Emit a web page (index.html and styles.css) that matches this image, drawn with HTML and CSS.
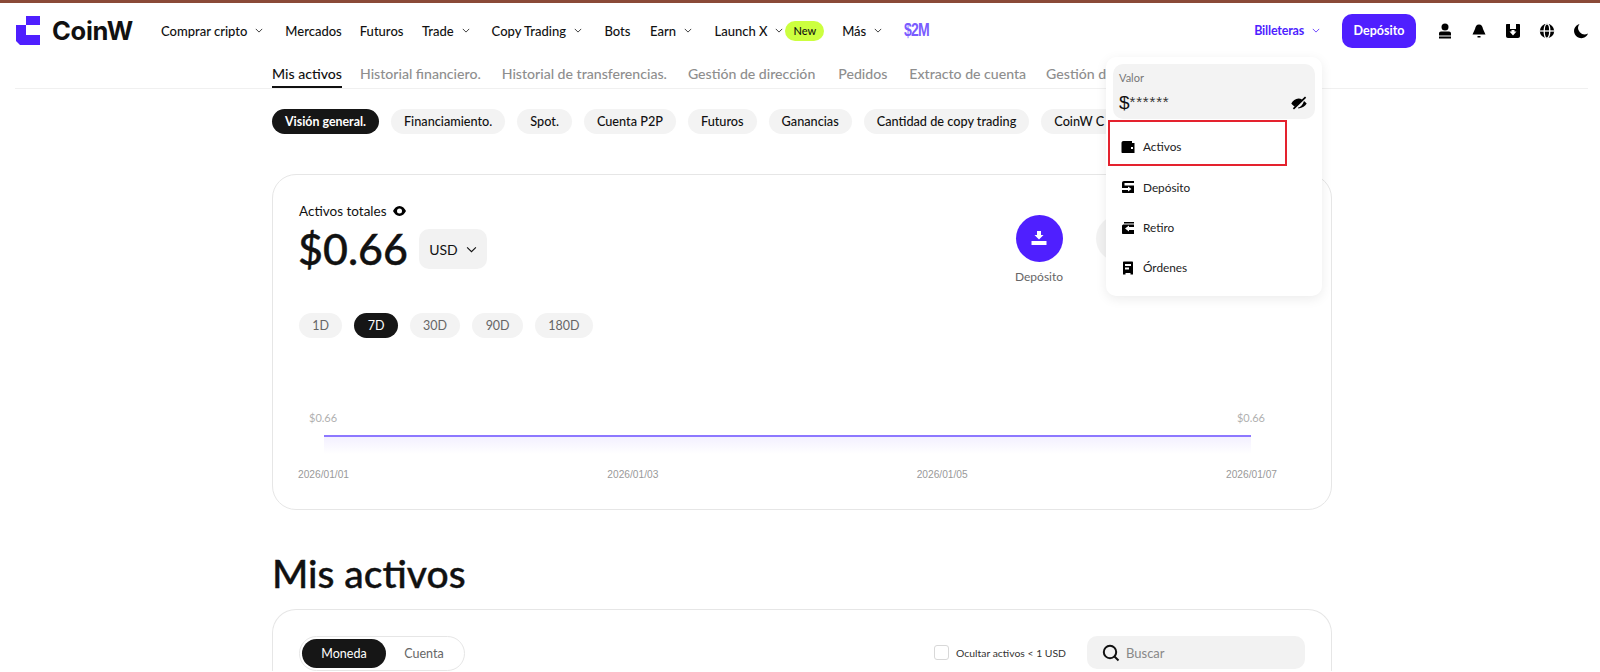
FILE: index.html
```html
<!DOCTYPE html>
<html lang="es">
    <head>
        <meta charset="UTF-8">
        <meta name="viewport" content="width=device-width, initial-scale=1.0">
        <title>CoinW - Mis activos</title>
        <link rel="stylesheet" href="styles.css">
    </head>
    <body>
        <div class="franja"></div>

        <!-- Cabecera -->
        <header class="cabecera">
            <a class="logo">
                <svg class="logo-icono" width="24" height="29" viewBox="0 0 24 29"><path fill="#4f1fff" d="M10 0H24V9H10ZM0 9L4 9H10V19H24V29H4L0 25Z"/></svg>
                <span class="logo-texto">CoinW</span>
            </a>
            <nav class="menu">
                <a class="menu-item m-comprar">Comprar cripto <svg class="flecha" viewBox="0 0 10 6"><path d="M1 1l4 4 4-4"/></svg></a>
                <a class="menu-item m-mercados">Mercados</a>
                <a class="menu-item m-futuros">Futuros</a>
                <a class="menu-item m-trade">Trade <svg class="flecha" viewBox="0 0 10 6"><path d="M1 1l4 4 4-4"/></svg></a>
                <a class="menu-item m-copy">Copy Trading <svg class="flecha" viewBox="0 0 10 6"><path d="M1 1l4 4 4-4"/></svg></a>
                <a class="menu-item m-bots">Bots</a>
                <a class="menu-item m-earn">Earn <svg class="flecha" viewBox="0 0 10 6"><path d="M1 1l4 4 4-4"/></svg></a>
                <a class="menu-item m-launch">Launch X <svg class="flecha" viewBox="0 0 10 6"><path d="M1 1l4 4 4-4"/></svg><span class="nuevo">New</span></a>
                <a class="menu-item m-mas">Más <svg class="flecha" viewBox="0 0 10 6"><path d="M1 1l4 4 4-4"/></svg></a>
                <a class="premio">$2M</a>
            </nav>
            <div class="cabecera-der">
                <a class="billeteras">Billeteras <svg class="flecha" viewBox="0 0 10 6"><path d="M1 1l4 4 4-4"/></svg></a>
                <a class="boton-deposito">Depósito</a>
                <div class="iconos">
                    <svg width="16" height="16" viewBox="0 0 16 16"><circle cx="8" cy="4" r="3.5"/><path d="M4 8.500H12C13.200 8.500 14 9.300 14 10.500V12.500H2V10.500C2 9.300 2.800 8.500 4 8.500ZM2 13.500H14V15.500H2Z"/></svg>
                    <svg width="16" height="16" viewBox="0 0 16 16"><path d="M8 1.500C10.500 1.500 11.500 3.500 12 6L14.500 11.500H1.500L4 6C4.500 3.500 5.500 1.500 8 1.500ZM6.500 13H9.500V14.500H6.500Z"/></svg>
                    <svg width="16" height="16" viewBox="0 0 16 16"><path fill-rule="evenodd" d="M2 1H5V6H11V1H14C14.600 1 15 1.400 15 2V13C15 14.200 14.200 15 13 15H3C1.800 15 1 14.200 1 13V2C1 1.400 1.400 1 2 1ZM4.500 8.500L8 12.500L11.500 8.500H9.500V7H6.500V8.500Z"/></svg>
                    <svg width="16" height="16" viewBox="0 0 16 16"><circle cx="8" cy="8" r="7.200"/><ellipse cx="8" cy="8" rx="2.800" ry="7.200" fill="none" stroke="#fff" stroke-width="1.300"/><path d="M0.500 8H15.500" stroke="#fff" stroke-width="1.300"/></svg>
                    <svg width="16" height="16" viewBox="0 0 16 16"><path d="M6.500 1A7.200 7.200 0 1 0 15 10.500A6.500 6.500 0 0 1 6.500 1Z"/></svg>
                </div>
            </div>
        </header>

        <!-- Pestañas -->
        <div class="pestanas">
            <a class="pestana activa">Mis activos</a>
            <a class="pestana p-financiero">Historial financiero.</a>
            <a class="pestana p-transferencias">Historial de transferencias.</a>
            <a class="pestana p-direccion">Gestión de dirección</a>
            <a class="pestana p-pedidos">Pedidos</a>
            <a class="pestana p-extracto">Extracto de cuenta</a>
            <a class="pestana">Gestión de</a>
        </div>

        <main class="contenido">
            <div class="filtros">
                <a class="filtro activo">Visión general.</a>
                <a class="filtro">Financiamiento.</a>
                <a class="filtro">Spot.</a>
                <a class="filtro">Cuenta P2P</a>
                <a class="filtro">Futuros</a>
                <a class="filtro">Ganancias</a>
                <a class="filtro">Cantidad de copy trading</a>
                <a class="filtro">CoinW C</a>
            </div>

            <!-- Resumen de activos -->
            <section class="tarjeta resumen">
                <div class="resumen-top">
                    <div>
                        <div class="total-titulo">Activos totales
                            <svg width="13" height="10" viewBox="0 0 13 10"><path fill-rule="evenodd" d="M6.500 0C9.500 0 11.800 2.500 13 5C11.800 7.500 9.500 10 6.500 10C3.500 10 1.200 7.500 0 5C1.200 2.500 3.500 0 6.500 0ZM6.500 2.500A2.500 2.500 0 1 0 6.500 7.500A2.500 2.500 0 1 0 6.500 2.500Z"/></svg>
                        </div>
                        <div class="total-fila">
                            <span class="total-valor">$0.66</span>
                            <span class="moneda">USD <svg class="flecha" viewBox="0 0 10 6"><path d="M1 1l4 4 4-4"/></svg></span>
                        </div>
                    </div>
                    <div class="acciones">
                        <div class="accion">
                            <span class="circulo principal">
                                <svg width="18" height="18" viewBox="0 0 18 18"><path fill="#fff" d="M7 1H11V5H13.500L9 9.500L4.500 5H7ZM1.500 11H16.500V15H1.500Z"/></svg>
                            </span>
                            Depósito
                        </div>
                        <div class="accion">
                            <span class="circulo"></span>
                        </div>
                    </div>
                </div>

                <div class="rangos">
                    <a class="rango">1D</a>
                    <a class="rango activo">7D</a>
                    <a class="rango">30D</a>
                    <a class="rango">90D</a>
                    <a class="rango">180D</a>
                </div>

                <div class="grafico">
                    <div class="grafico-valores"><span>$0.66</span><span>$0.66</span></div>
                    <div class="grafico-linea"></div>
                    <div class="grafico-fechas">
                        <span>2026/01/01</span>
                        <span>2026/01/03</span>
                        <span>2026/01/05</span>
                        <span>2026/01/07</span>
                    </div>
                </div>
            </section>

            <h1 class="titulo">Mis activos</h1>

            <!-- Lista de activos -->
            <section class="tarjeta lista">
                <div class="selector">
                    <a class="selector-op activo">Moneda</a>
                    <a class="selector-op">Cuenta</a>
                </div>
                <label class="ocultar"><span class="casilla"></span>Ocultar activos &lt; 1 USD</label>
                <div class="buscar">
                    <svg width="18" height="18" viewBox="0 0 18 18"><circle cx="8" cy="8" r="6.200" fill="none" stroke="#111" stroke-width="2"/><path d="M12.500 12.500L16.500 16.500" stroke="#111" stroke-width="2"/></svg>
                    <span>Buscar</span>
                </div>
            </section>
        </main>

        <!-- Menú de billeteras -->
        <div class="desplegable">
            <div class="saldo">
                <div class="saldo-titulo">Valor</div>
                <div class="saldo-fila">
                    <span class="saldo-valor">$<span class="asteriscos">******</span></span>
                    <svg width="16" height="14" viewBox="0 0 16 14"><path d="M7.500 2.500C8.800 2.500 10 2.800 11 3.400L3.500 10.500C2.200 9.700 1 8.500 0.300 7.500C1.800 4.800 4.500 2.500 7.500 2.500ZM14 0.500L15.200 1.800L3 13.500L1.800 12.200ZM13 5L15.700 7.500C14.300 10 11.500 12 7.500 12.500L6.800 11.800C9.800 11 11.800 8.500 13 5Z"/></svg>
                </div>
            </div>
            <a class="desp-item marcado">
                <svg width="14" height="14" viewBox="0 0 14 14"><path fill-rule="evenodd" d="M2.500 1H11V3H13.500V13H1.500C0.900 13 0.500 12.600 0.500 12V3C0.500 1.800 1.300 1 2.500 1ZM10 7V9H12V7Z"/></svg>
                Activos
            </a>
            <a class="desp-item">
                <svg width="14" height="14" viewBox="0 0 14 14"><path d="M1 3C1 1.800 1.800 1 3 1H13V3H3.500V5.500H13V13H2C1.400 13 1 12.600 1 12V10H7V11.500L10.500 9L7 6.500V8H1Z"/></svg>
                Depósito
            </a>
            <a class="desp-item">
                <svg width="14" height="14" viewBox="0 0 14 14"><path d="M3 1H13V2.500H3ZM1 5C1 4 1.800 3.500 3 3.500H13V6H8V4.500L4 7.500L8 10.500V9H13V13H2C1.300 13 1 12.500 1 12Z"/></svg>
                Retiro
            </a>
            <a class="desp-item">
                <svg width="14" height="14" viewBox="0 0 14 14"><path fill-rule="evenodd" d="M3 0.500H11C11.600 0.500 12 0.900 12 1.500V13.500H9.500V12H4.500V13.500H2V1.500C2 0.900 2.400 0.500 3 0.500ZM4 3V5H10V3ZM4 6.500V8.500H8V6.500Z"/></svg>
                Órdenes
            </a>
        </div>
    </body>
</html>
```

FILE: styles.css
```css
/* Estilos generales */
html, body {
    height: 672px;
    overflow: hidden;
}
body {
    font-family: "Lato", "Open Sans", sans-serif;
    color: #111;
    background-color: #fff;
    margin: 0;
    position: relative;
}
a {
    color: inherit;
}
.franja {
    height: 3px;
    background-color: #8a4a38;
}
.flecha {
    width: 8px;
    height: 5px;
    fill: none;
    stroke: currentColor;
    stroke-width: 1;
}

/* Cabecera */
.cabecera {
    display: flex;
    align-items: center;
    height: 55px;
    padding: 0 11px 0 16px;
}
.logo {
    display: flex;
    align-items: center;
    gap: 12px;
    width: 145px;
}
.logo-texto {
    font-family: "Inter", sans-serif;
    font-size: 25.500px;
    font-weight: 700;
    letter-spacing: -0.3px;
}
.menu {
    display: flex;
    align-items: center;
    font-size: 13px;
    font-weight: 500;
}
.menu-item {
    display: flex;
    align-items: center;
    gap: 8px;
    white-space: nowrap;
}
.m-comprar { margin-right: 22px; }
.m-mercados { margin-right: 18px; }
.m-futuros { margin-right: 18.500px; }
.m-trade { margin-right: 22px; }
.m-copy { margin-right: 22.500px; }
.m-bots { margin-right: 19.500px; }
.m-earn { margin-right: 22.500px; }
.m-launch { margin-right: 18px; }
.m-mas { margin-right: 21.500px; }
.nuevo {
    background-color: #ccff3f;
    border-radius: 10px;
    font-size: 11px;
    line-height: 20px;
    padding: 0 8px;
    margin-left: -6px;
}
.premio {
    font-family: "Liberation Sans", sans-serif;
    font-size: 18px;
    font-weight: 700;
    color: #7a5cff;
    letter-spacing: -1px;
    transform: scaleX(0.78);
    transform-origin: left center;
}
.cabecera-der {
    display: flex;
    align-items: center;
    margin-left: auto;
}
.billeteras {
    display: flex;
    align-items: center;
    gap: 8px;
    font-size: 12.500px;
    font-weight: 700;
    color: #4f1fff;
    margin-right: 22px;
    letter-spacing: -0.2px;
}
.boton-deposito {
    width: 74px;
    height: 34px;
    line-height: 34px;
    text-align: center;
    font-size: 12.500px;
    font-weight: 700;
    color: #fff;
    background-color: #4f1fff;
    border-radius: 10px;
}
.iconos {
    display: flex;
    align-items: center;
    gap: 18px;
    margin-left: 21px;
}

/* Pestañas */
.pestanas {
    display: flex;
    gap: 20px;
    height: 30px;
    margin: 0 12px 0 15px;
    padding-left: 257px;
    border-bottom: 1px solid #f0f0f0;
    font-size: 14.100px;
    font-weight: 500;
    color: #8e8e8e;
    white-space: nowrap;
    overflow: hidden;
}
.pestana {
    height: 30px;
    line-height: 32px;
    box-sizing: border-box;
}
.pestana.activa {
    color: #111;
    border-bottom: 2px solid #111;
}
.p-financiero { margin-left: -2px; }
.p-transferencias { margin-left: 1px; }
.p-direccion { margin-left: 1px; }
.p-pedidos { margin-left: 3px; }
.p-extracto { margin-left: 2px; }

/* Contenido */
.contenido {
    width: 1060px;
    margin-left: 272px;
}
.filtros {
    display: flex;
    gap: 12px;
    margin-top: 20px;
    white-space: nowrap;
}
.filtro {
    height: 25px;
    line-height: 25px;
    padding: 0 13px;
    border-radius: 13px;
    background-color: #f3f3f3;
    font-size: 12.700px;
    font-weight: 500;
}
.filtro.activo {
    background-color: #161616;
    color: #fff;
    font-size: 12.400px;
    font-weight: 700;
}
.tarjeta {
    border: 1px solid #e6e6e6;
    border-radius: 24px;
    box-sizing: border-box;
}
.resumen {
    height: 336px;
    margin-top: 40px;
    padding: 27px 25px 0 26px;
}
.resumen-top {
    display: flex;
    justify-content: space-between;
    height: 111px;
}
.total-titulo {
    display: flex;
    align-items: center;
    gap: 6px;
    font-size: 13.500px;
    height: 18px;
}
.total-fila {
    display: flex;
    align-items: center;
    gap: 11px;
    margin-top: 9px;
}
.total-valor {
    font-size: 43px;
    font-weight: 500;
    line-height: 40px;
    margin-left: -1px;
    -webkit-text-stroke: 0.4px #111;
}
.moneda {
    display: flex;
    align-items: center;
    justify-content: center;
    gap: 8px;
    width: 68px;
    height: 40px;
    border-radius: 10px;
    background-color: #f2f2f2;
    font-size: 14px;
}
.moneda .flecha {
    width: 11px;
    height: 7px;
}
.acciones {
    display: flex;
    gap: 10px;
    padding: 13px 152px 0 0;
}
.accion {
    display: flex;
    flex-direction: column;
    align-items: center;
    gap: 7px;
    width: 70px;
    font-size: 12px;
    color: #666;
}
.circulo {
    display: flex;
    align-items: center;
    justify-content: center;
    width: 47px;
    height: 47px;
    border-radius: 50%;
    background-color: #f2f2f2;
}
.circulo.principal {
    background-color: #4f1fff;
}
.rangos {
    display: flex;
    gap: 12px;
}
.rango {
    height: 25px;
    line-height: 25px;
    padding: 0 13.300px;
    border-radius: 13px;
    background-color: #f3f3f3;
    font-size: 12.500px;
    color: #666;
}
.rango.activo {
    background-color: #161616;
    color: #fff;
}
.grafico {
    margin: 72px 29px 0 -1px;
}
.grafico-valores {
    display: flex;
    justify-content: space-between;
    padding: 0 12px 0 11px;
    font-size: 11px;
    line-height: 16px;
    color: #b0b0b0;
}
.grafico-linea {
    height: 17px;
    margin: 9px 26px 0 26px;
    border-top: 2px solid #8d78ff;
    background: linear-gradient(#f3f0ff, #fff);
}
.grafico-fechas {
    display: flex;
    justify-content: space-between;
    margin-top: 14px;
    font-family: "Liberation Sans", sans-serif;
    font-size: 10.200px;
    line-height: 14px;
    color: #999;
}

/* Mis activos */
.titulo {
    margin: 40px 0 0;
    font-size: 39px;
    line-height: 47px;
    font-weight: 500;
    -webkit-text-stroke: 0.4px #111;
}
.lista {
    display: flex;
    align-items: flex-start;
    height: 62px;
    margin-top: 12px;
    padding: 26px 26px 0;
    border-bottom: 0;
    border-radius: 24px 24px 0 0;
}
.selector {
    display: flex;
    width: 166px;
    height: 35px;
    padding: 2px;
    box-sizing: border-box;
    border: 1px solid #e6e6e6;
    border-radius: 18px;
    font-size: 12.500px;
}
.selector-op {
    flex: 1;
    line-height: 29px;
    text-align: center;
    color: #666;
    border-radius: 15px;
}
.selector-op.activo {
    flex: none;
    width: 84px;
    background-color: #161616;
    color: #fff;
}
.ocultar {
    display: flex;
    align-items: center;
    gap: 7px;
    margin-left: auto;
    height: 33px;
    font-size: 10.400px;
    color: #333;
}
.casilla {
    width: 13px;
    height: 13px;
    border: 1px solid #d8d8d8;
    border-radius: 3px;
}
.buscar {
    display: flex;
    align-items: center;
    gap: 6px;
    width: 218px;
    height: 33px;
    margin-left: 21px;
    padding-left: 15px;
    box-sizing: border-box;
    border-radius: 10px;
    background-color: #f2f2f2;
    font-size: 13px;
    color: #888;
}

/* Desplegable de billeteras */
.desplegable {
    position: absolute;
    top: 57px;
    left: 1106px;
    width: 216px;
    height: 239px;
    padding: 7px 7px 0 2px;
    box-sizing: border-box;
    background-color: #fff;
    border-radius: 10px;
    box-shadow: 0 3px 12px rgba(0, 0, 0, 0.08);
}
.saldo {
    margin-left: 5px;
    height: 55px;
    padding: 6px;
    box-sizing: border-box;
    border-radius: 10px;
    background-color: #f3f3f3;
}
.saldo-titulo {
    font-size: 11px;
    line-height: 16px;
    color: #777;
}
.saldo-fila {
    display: flex;
    justify-content: space-between;
    align-items: center;
    margin-top: 5px;
    padding-right: 2px;
}
.saldo-valor {
    font-family: "Liberation Sans", sans-serif;
    font-size: 19px;
    line-height: 22px;
}
.asteriscos {
    font-size: 15px;
    letter-spacing: 0.8px;
    color: #333;
    vertical-align: 2px;
}
.desp-item {
    display: flex;
    align-items: center;
    gap: 8px;
    width: 179px;
    height: 40.400px;
    padding-left: 13px;
    box-sizing: border-box;
    font-size: 11.800px;
    color: #222;
}
.desp-item.marcado {
    height: 46px;
    margin: 1px 0;
    padding-top: 7px;
    border: 2px solid #e4222e;
    padding-left: 11px;
}
```
